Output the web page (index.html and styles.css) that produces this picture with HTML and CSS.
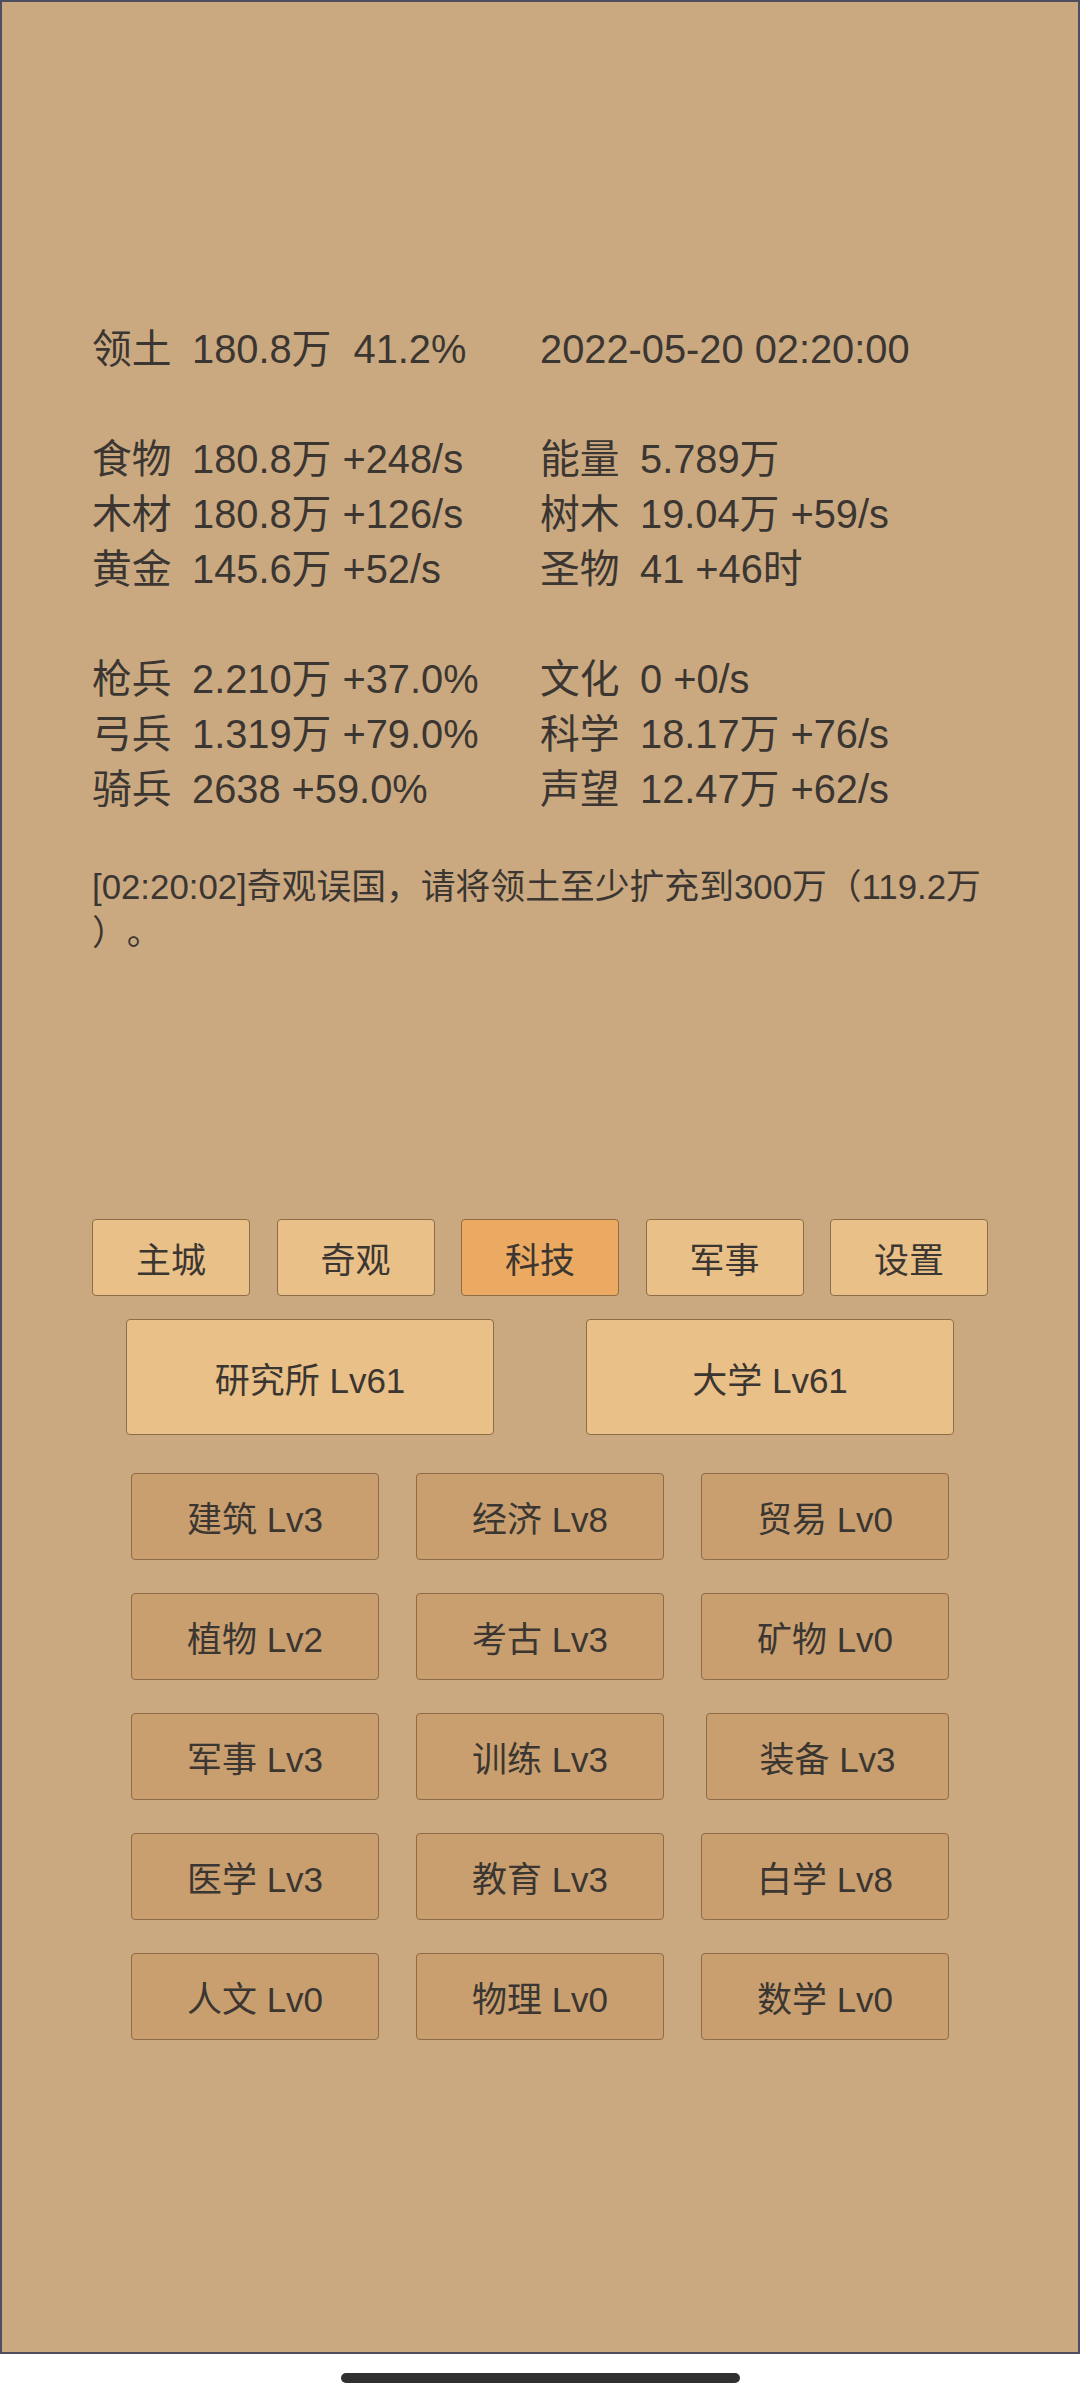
FILE: index.html
```html
<!DOCTYPE html>
<html lang="zh-CN">
<head>
<meta charset="utf-8">
<title>Game</title>
<link rel="stylesheet" href="styles.css">
</head>
<body>
<div class="frame">
  <div class="stats">
    <div class="cell"><span class="lbl">领土</span>180.8万&nbsp;&nbsp;41.2%</div>
    <div class="cell">2022-05-20 02:20:00</div>
    <div class="blank"></div>
    <div class="cell"><span class="lbl">食物</span>180.8万 +248/s</div>
    <div class="cell"><span class="lbl">能量</span>5.789万</div>
    <div class="cell"><span class="lbl">木材</span>180.8万 +126/s</div>
    <div class="cell"><span class="lbl">树木</span>19.04万 +59/s</div>
    <div class="cell"><span class="lbl">黄金</span>145.6万 +52/s</div>
    <div class="cell"><span class="lbl">圣物</span>41 +46时</div>
    <div class="blank"></div>
    <div class="cell"><span class="lbl">枪兵</span>2.210万 +37.0%</div>
    <div class="cell"><span class="lbl">文化</span>0 +0/s</div>
    <div class="cell"><span class="lbl">弓兵</span>1.319万 +79.0%</div>
    <div class="cell"><span class="lbl">科学</span>18.17万 +76/s</div>
    <div class="cell"><span class="lbl">骑兵</span>2638 +59.0%</div>
    <div class="cell"><span class="lbl">声望</span>12.47万 +62/s</div>
  </div>
  <p class="msg">[02:20:02]奇观误国，请将领土至少扩充到300万（119.2万）。</p>
  <div class="tabs">
    <div class="btn tab">主城</div>
    <div class="btn tab">奇观</div>
    <div class="btn tab active">科技</div>
    <div class="btn tab">军事</div>
    <div class="btn tab">设置</div>
  </div>
  <div class="halls">
    <div class="btn hall">研究所 Lv61</div>
    <div class="btn hall">大学 Lv61</div>
  </div>
  <div class="techs">
    <div class="btn tech">建筑 Lv3</div>
    <div class="btn tech">经济 Lv8</div>
    <div class="btn tech">贸易 Lv0</div>
    <div class="btn tech">植物 Lv2</div>
    <div class="btn tech">考古 Lv3</div>
    <div class="btn tech">矿物 Lv0</div>
    <div class="btn tech">军事 Lv3</div>
    <div class="btn tech">训练 Lv3</div>
    <div class="btn tech shifted">装备 Lv3</div>
    <div class="btn tech">医学 Lv3</div>
    <div class="btn tech">教育 Lv3</div>
    <div class="btn tech">白学 Lv8</div>
    <div class="btn tech">人文 Lv0</div>
    <div class="btn tech">物理 Lv0</div>
    <div class="btn tech">数学 Lv0</div>
  </div>
</div>
<div class="navbar"><div class="home"></div></div>
</body>
</html>
```

FILE: styles.css
```css
html, body {
  margin: 0;
  padding: 0;
  background: #ffffff;
}

body {
  font-family: "Liberation Sans", "Noto Sans CJK SC", sans-serif;
  color: #3b3631;
}

.frame {
  box-sizing: border-box;
  height: 2354px;
  border: 2px solid #4f4d60;
  background: #caa981;
  padding: 320px 90px 0 90px;
}

.stats {
  display: grid;
  grid-template-columns: 448px 1fr;
  font-size: 39.8px;
  line-height: 55px;
}

.cell {
  white-space: nowrap;
}

.blank {
  grid-column: 1 / -1;
  height: 55px;
}

.lbl {
  display: inline-block;
  width: 100px;
}

.msg {
  margin: 47px 0 0 0;
  font-size: 34.8px;
  line-height: 46px;
  line-break: anywhere;
  text-spacing-trim: space-all;
}

.btn {
  box-sizing: border-box;
  display: flex;
  align-items: center;
  justify-content: center;
  border: 1.5px solid #8d6c47;
  border-radius: 4px;
  font-size: 35px;
  color: #3b3631;
}

.tabs {
  display: flex;
  gap: 26.5px;
  margin-top: 263px;
}

.tab {
  width: 158px;
  height: 77px;
  background: #e9c088;
}

.tab.active {
  background: #eba962;
}

.halls {
  display: flex;
  justify-content: center;
  gap: 92px;
  margin-top: 23px;
}

.hall {
  width: 368px;
  height: 116px;
  background: #e9c088;
}

.techs {
  display: grid;
  grid-template-columns: repeat(3, 248px);
  grid-auto-rows: 87px;
  column-gap: 37px;
  row-gap: 33px;
  justify-content: center;
  margin-top: 38px;
}

.tech {
  background: #c99f6f;
}

.tech.shifted {
  margin-left: 5px;
}

.navbar {
  display: flex;
  justify-content: center;
  padding-top: 19px;
}

.home {
  width: 399px;
  height: 10px;
  border-radius: 5px;
  background: #303030;
}
```
